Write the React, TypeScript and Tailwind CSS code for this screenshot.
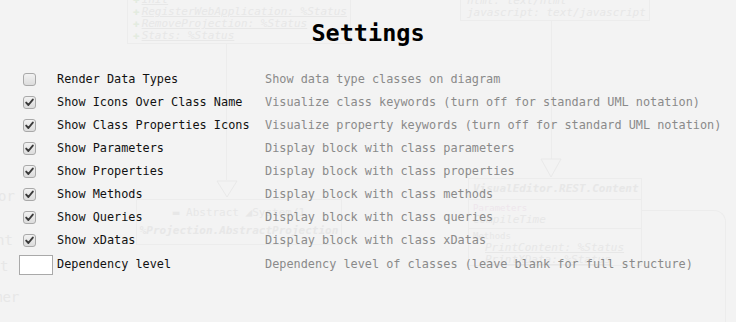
import React from "react";

const mono = "font-['DejaVu_Sans_Mono','Liberation_Mono',monospace]";

interface SettingRow {
  label: string;
  hint: string;
  checked?: boolean;
  input?: boolean;
}

const rows: SettingRow[] = [
  { label: "Render Data Types", hint: "Show data type classes on diagram", checked: false },
  { label: "Show Icons Over Class Name", hint: "Visualize class keywords (turn off for standard UML notation)", checked: true },
  { label: "Show Class Properties Icons", hint: "Visualize property keywords (turn off for standard UML notation)", checked: true },
  { label: "Show Parameters", hint: "Display block with class parameters", checked: true },
  { label: "Show Properties", hint: "Display block with class properties", checked: true },
  { label: "Show Methods", hint: "Display block with class methods", checked: true },
  { label: "Show Queries", hint: "Display block with class queries", checked: true },
  { label: "Show xDatas", hint: "Display block with class xDatas", checked: true },
  { label: "Dependency level", hint: "Dependency level of classes (leave blank for full structure)", input: true },
];

function Checkbox({ checked }: { checked?: boolean }) {
  return (
    <span className="flex h-[13px] w-[13px] items-center justify-center rounded-[3px] border border-[#a9a9a9] bg-gradient-to-b from-[#f2f2f2] to-[#dcdcdc]">
      {checked && (
        <svg width="9" height="9" viewBox="0 0 9 9">
          <path d="M1.2 4.6 L3.4 7 L7.8 1.6" fill="none" stroke="#3a3a3a" strokeWidth="1.9" strokeLinecap="round" strokeLinejoin="round" />
        </svg>
      )}
    </span>
  );
}

// faint class diagram that sits behind the settings overlay
function DiagramBackdrop() {
  return (
    <div className={`pointer-events-none absolute inset-0 overflow-hidden whitespace-nowrap ${mono} text-[11px] italic text-[#e7e7e7]`}>
      <div className="absolute left-[127px] top-[-7px] h-[51px] w-[224px] border border-[#ececec] pl-[5px] leading-[12px]">
        {["Init", "RegisterWebApplication: %Status", "RemoveProjection: %Status", "Stats: %Status"].map((m) => (
          <div key={m} className="flex items-center gap-[2px]">
            <span className="not-italic text-[#e3ebe0]">✚</span>
            <span className="underline">{m}</span>
          </div>
        ))}
      </div>
      <div className="absolute left-[226px] top-[44px] h-[136px] w-px bg-[#ececec]" />
      <svg className="absolute left-[216px] top-[180px]" width="22" height="18">
        <path d="M1 1 L21 1 L11 17 Z" fill="none" stroke="#e9e9e9" />
      </svg>
      <div className="absolute left-[460px] top-[-6px] h-[27px] w-[190px] border border-[#ececec] pl-[6px] leading-[12px]">
        <div>html: text/html</div>
        <div>javascript: text/javascript</div>
      </div>
      <div className="absolute left-[551px] top-[20px] h-[139px] w-px bg-[#ececec]" />
      <svg className="absolute left-[540px] top-[158px]" width="22" height="20">
        <path d="M1 1 L21 1 L11 19 Z" fill="none" stroke="#e9e9e9" />
      </svg>
      <div className="absolute left-[136px] top-[199px] flex h-[46px] w-[206px] flex-col items-center justify-center gap-[6px] border border-[#ececec] leading-[12px]">
        <div className="not-italic">▬ Abstract ◢System/1</div>
        <div className="font-bold">%Projection.AbstractProjection</div>
      </div>
      <div className="absolute left-[468px] top-[178px] h-[88px] w-[174px] border border-[#ececec] leading-[12px]">
        <div className="border-b border-[#ececec] px-[4px] py-[4px] font-bold">VisualEditor.REST.Content</div>
        <div className="border-b border-[#ececec] px-[4px] py-[2px]">
          <div className="text-[9px] not-italic text-[#eee6ec]">Parameters</div>
          <div>CompileTime</div>
        </div>
        <div className="px-[4px] py-[1px]">
          <div className="text-[9px] not-italic">Methods</div>
          <div className="pl-[12px] underline">PrintContent: %Status</div>
          <div className="pl-[12px] underline">PrintXData: %Status</div>
        </div>
      </div>
      <div className="absolute left-[642px] top-[210px] h-[140px] w-[84px] rounded-tr-[12px] border-r border-t border-[#ececec]" />
      <div className="absolute left-[-2px] top-[188px] text-[14px] not-italic leading-[16px]">or</div>
      <div className="absolute left-[-4px] top-[232px] text-[14px] not-italic leading-[16px]">nt</div>
      <div className="absolute left-[0px] top-[258px] text-[14px] not-italic leading-[16px]">t</div>
      <div className="absolute left-[-6px] top-[289px] text-[14px] not-italic leading-[16px]">mer</div>
    </div>
  );
}

export default function App() {
  return (
    <div className={`relative h-[322px] w-[736px] overflow-hidden bg-[#f3f3f3] ${mono}`}>
      <DiagramBackdrop />
      <div className="relative flex flex-col pt-[17px]">
        <h1 className="mb-[19px] text-center text-[23.5px] font-bold leading-[32px] text-black">Settings</h1>
        <div className="flex flex-col text-[11.85px]">
          {rows.map((row) => (
            <div key={row.label} className={`flex items-center ${row.input ? "h-[25px]" : "h-[23px]"}`}>
              <div className={`flex w-[57px] shrink-0 ${row.input ? "pl-[19px]" : "pl-[23px]"}`}>
                {row.input ? (
                  <span className="block h-[20px] w-[34px] border border-[#a9a9a9] bg-white" />
                ) : (
                  <Checkbox checked={row.checked} />
                )}
              </div>
              <div className="w-[208px] shrink-0 whitespace-nowrap text-[#111]">{row.label}</div>
              <div className="whitespace-nowrap text-[#8a8a8a]">{row.hint}</div>
            </div>
          ))}
        </div>
      </div>
    </div>
  );
}
